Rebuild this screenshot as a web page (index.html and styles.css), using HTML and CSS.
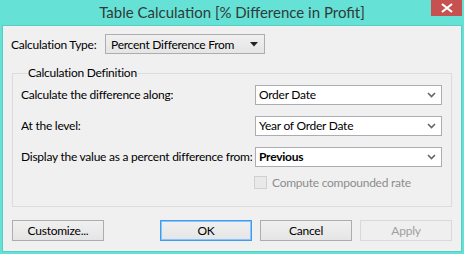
FILE: index.html
```html
<!DOCTYPE html>
<html>
<head>
	<title>Table Calculation</title>
	<link rel="stylesheet" href="styles.css">
</head>
<body>
	<div class="window">
		<div class="titlebar">
			<span></span>
			<span class="title">Table Calculation [% Difference in Profit]</span>
			<div class="close">
				<svg width="12" height="10" viewBox="0 0 12 10"><path d="M1 1 L11 9 M11 1 L1 9" stroke="#fff" stroke-width="2.2"/></svg>
			</div>
		</div>

		<div class="client">
			<!-- Calculation type -->
			<div class="type-row">
				<span class="type-label">Calculation Type:</span>
				<div class="dropbtn">
					<span>Percent Difference From</span>
					<svg width="8" height="5" viewBox="0 0 8 5"><path d="M0 0 H8 L4 4.5 Z" fill="#222"/></svg>
				</div>
			</div>

			<!-- Definition group -->
			<fieldset class="group">
				<legend>Calculation Definition</legend>
				<div class="row">
					<span class="row-label">Calculate the difference along:</span>
					<div class="combo"><span>Order Date</span><svg class="chev" width="9" height="6" viewBox="0 0 9 6"><path d="M1 1 L4.5 4.5 L8 1" stroke="#666" stroke-width="1.6" fill="none"/></svg></div>
				</div>
				<div class="row">
					<span class="row-label">At the level:</span>
					<div class="combo"><span>Year of Order Date</span><svg class="chev" width="9" height="6" viewBox="0 0 9 6"><path d="M1 1 L4.5 4.5 L8 1" stroke="#666" stroke-width="1.6" fill="none"/></svg></div>
				</div>
				<div class="row">
					<span class="row-label">Display the value as a percent difference from:</span>
					<div class="combo"><span class="bold">Previous</span><svg class="chev" width="9" height="6" viewBox="0 0 9 6"><path d="M1 1 L4.5 4.5 L8 1" stroke="#666" stroke-width="1.6" fill="none"/></svg></div>
				</div>
				<div class="check-row">
					<span class="checkbox"></span>
					<span>Compute compounded rate</span>
				</div>
			</fieldset>

			<!-- Buttons -->
			<div class="buttons">
				<div class="btn">Customize...</div>
				<div class="btn-group">
					<div class="btn default">OK</div>
					<div class="btn">Cancel</div>
					<div class="btn disabled">Apply</div>
				</div>
			</div>
		</div>
	</div>
</body>
</html>
```

FILE: styles.css
```css
html, body {
	margin: 0;
	padding: 0;
}
body {
	width: 464px;
	height: 254px;
	overflow: hidden;
	font-family: Lato, "Noto Sans", sans-serif;
	font-size: 12px;
	letter-spacing: -0.25px;
	color: #000;
	white-space: nowrap;
}
.window {
	width: 464px;
	height: 254px;
	box-sizing: border-box;
	background-color: #66e1d5;
	padding: 0 2px 2px 2px;
	display: flex;
	flex-direction: column;
}
.titlebar {
	height: 25px;
	display: grid;
	grid-template-columns: 1fr auto 1fr;
	align-items: start;
}
.title {
	font-size: 15px;
	letter-spacing: 0;
	color: #2f3b3a;
	line-height: 22px;
	padding-top: 1px;
}
.close {
	justify-self: end;
	width: 31px;
	height: 16px;
	background-color: #c75050;
	display: flex;
	align-items: center;
	justify-content: center;
}
.client {
	flex: 1;
	min-width: 0;
	background-color: #f0f0f0;
	border: 1px solid #55cfc2;
	padding: 8px 8px 0 8px;
	display: flex;
	flex-direction: column;
}
.type-row {
	display: flex;
	align-items: center;
	height: 20px;
}
.type-label {
	width: 94px;
	flex-shrink: 0;
}
.dropbtn {
	width: 160px;
	height: 20px;
	box-sizing: border-box;
	border: 1px solid #adadad;
	background: linear-gradient(#f0f0f0, #e5e5e5);
	display: flex;
	align-items: center;
	justify-content: space-between;
	padding: 0 6px 0 5px;
}
.group {
	margin: 12px 1px 0 1px;
	padding: 4px 9px 12px 8px;
	border: 1px solid #dcdcdc;
	height: 141px;
	min-width: 0;
	box-sizing: border-box;
	display: flex;
	flex-direction: column;
	gap: 10px;
}
.group legend {
	padding: 0 1px;
	margin-left: 6px;
	line-height: 14px;
}
.row {
	display: flex;
	align-items: center;
	justify-content: space-between;
	height: 21px;
}
.row-label {
	min-width: 0;
	overflow: hidden;
}
.combo {
	width: 187px;
	height: 20px;
	flex-shrink: 0;
	box-sizing: border-box;
	background: #fff;
	border: 1px solid #abadb3;
	display: flex;
	align-items: center;
	justify-content: space-between;
	padding: 0 5px 0 3px;
}
.bold {
	font-weight: bold;
}
.check-row {
	display: flex;
	align-items: center;
	gap: 5px;
	margin-left: 233px;
	margin-top: -2px;
	color: #8d8d8d;
}
.checkbox {
	width: 11px;
	height: 11px;
	border: 1px solid #d0d0d0;
	background: #e9e9e9;
}
.buttons {
	display: flex;
	justify-content: space-between;
	margin: 13px 1px 0 1px;
}
.btn-group {
	display: flex;
	gap: 8px;
}
.btn {
	width: 92px;
	height: 21px;
	box-sizing: border-box;
	border: 1px solid #adadad;
	background: linear-gradient(#f0f0f0, #e5e5e5);
	display: flex;
	align-items: center;
	justify-content: center;
}
.btn.default {
	border-color: #3d9bf3;
	box-shadow: inset 0 0 0 1px #8cc4f8;
}
.btn.disabled {
	border-color: #d9d9d9;
	background: #efefef;
	color: #a0a0a0;
}
```
